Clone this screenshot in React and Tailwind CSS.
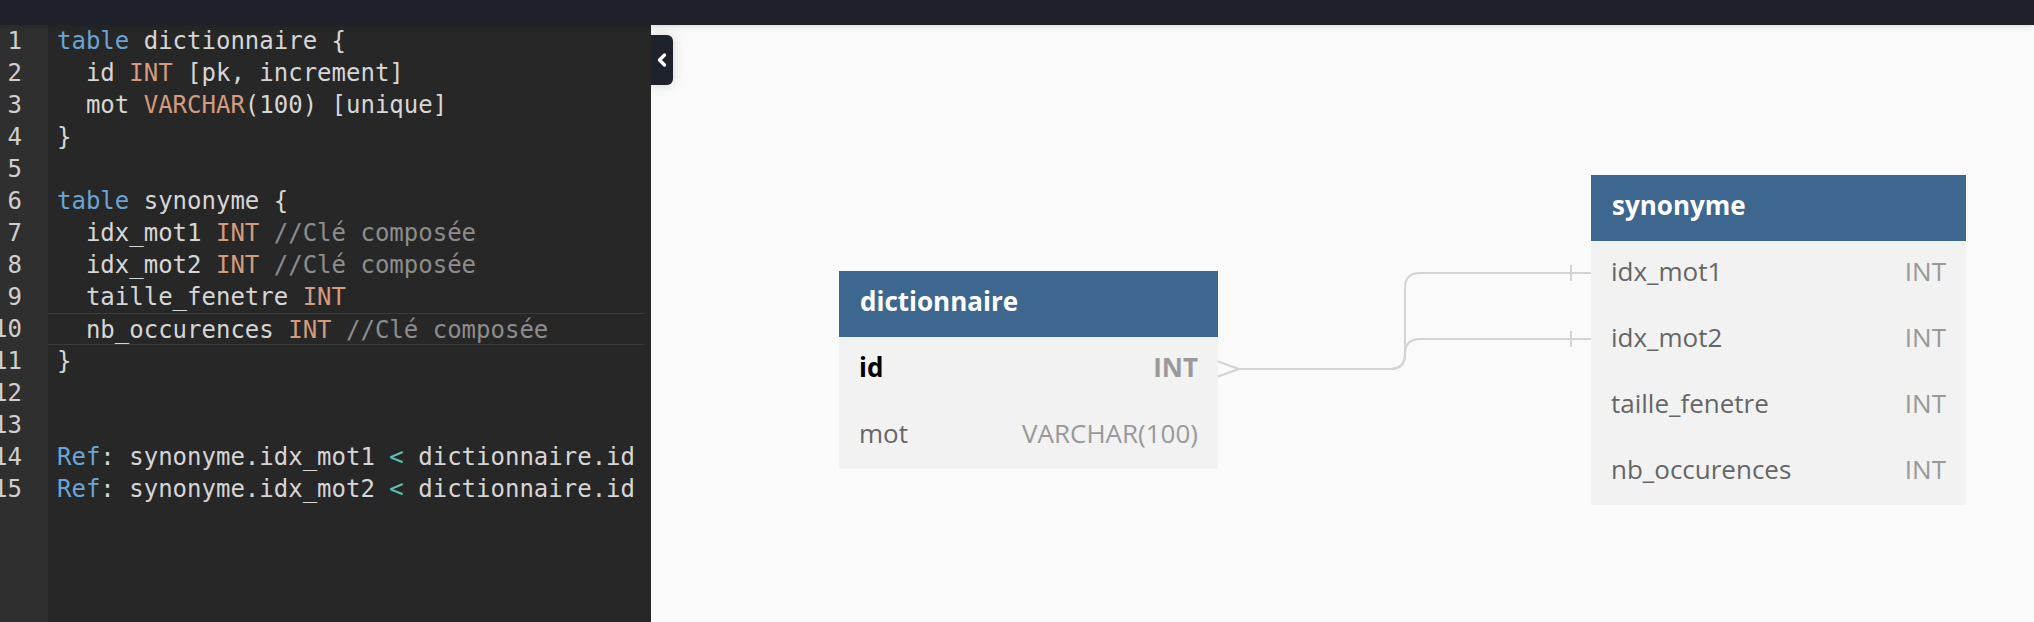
import { ChevronLeft } from 'lucide-react'

const K = ({ children }) => <span className="text-[#6aa4d8]">{children}</span>
const T = ({ children }) => <span className="text-[#d49b7e]">{children}</span>
const C = ({ children }) => <span className="text-[#8d8d8d]">{children}</span>
const O = ({ children }) => <span className="text-[#5fc2b0]">{children}</span>

const lines = [
    <><K>table</K> dictionnaire {'{'}</>,
    <>  id <T>INT</T> [pk, increment]</>,
    <>  mot <T>VARCHAR</T>(100) [unique]</>,
    <>{'}'}</>,
    <></>,
    <><K>table</K> synonyme {'{'}</>,
    <>  idx_mot1 <T>INT</T> <C>//Clé composée</C></>,
    <>  idx_mot2 <T>INT</T> <C>//Clé composée</C></>,
    <>  taille_fenetre <T>INT</T></>,
    <>  nb_occurences <T>INT</T> <C>//Clé composée</C></>,
    <>{'}'}</>,
    <></>,
    <></>,
    <><K>Ref</K>: synonyme.idx_mot1 <O>&lt;</O> dictionnaire.id</>,
    <><K>Ref</K>: synonyme.idx_mot2 <O>&lt;</O> dictionnaire.id</>,
]

function Editor() {
    return (
        <div className="relative flex w-[651px] shrink-0 bg-[#272727] font-['DejaVu_Sans_Mono',monospace] text-[24px] leading-[32px]">
            {/* gutter */}
            <div className="w-[48px] shrink-0 bg-[#2f2f2f] overflow-hidden">
                {lines.map((_, i) => (
                    <div key={i} className="w-[22px] h-[32px] flex justify-end whitespace-nowrap text-[#cfcfcf]">
                        {i + 1}
                    </div>
                ))}
            </div>
            <div className="flex-1 pr-[7px]">
                {lines.map((l, i) => (
                    <div
                        key={i}
                        className={
                            i === 9
                                ? 'h-[32px] pl-[9px] whitespace-pre text-[#d6d6d6] border-y border-[#3b3b3b] box-border'
                                : 'h-[32px] pl-[9px] whitespace-pre text-[#d6d6d6]'
                        }
                    >
                        {l}
                    </div>
                ))}
            </div>
        </div>
    )
}

function Table({ name, fields, className }) {
    return (
        <div className={'absolute bg-[#f2f2f2] font-["Open_Sans",sans-serif] ' + className}>
            <div className="h-[66px] bg-[#3e678f] flex items-center px-[21px] pb-[5px] text-[26px] font-bold text-white">
                {name}
            </div>
            {fields.map((f) => (
                <div key={f.name} className="h-[66px] flex items-center justify-between px-[20px] pb-[5px] text-[26px]">
                    <span className={f.pk ? 'font-bold text-black' : 'text-[#666666]'}>{f.name}</span>
                    <span className={f.pk ? 'font-bold text-[#9a9a9a]' : 'text-[#999999]'}>{f.type}</span>
                </div>
            ))}
        </div>
    )
}

function Canvas() {
    return (
        <div className="relative flex-1 bg-[#fafafa] overflow-hidden">
            <svg className="absolute inset-0 w-full h-full" fill="none" stroke="#d3d3d3" strokeWidth="2">
                <path d="M567 336.5 L588 344 L567 351.5" />
                <path d="M588 344 H739 Q754 344 754 329 V263 Q754 248 769 248 H940" />
                <path d="M588 344 H739 Q754 344 754 329 V329 Q754 314 769 314 H940" />
                <path d="M920 240 V256 M920 306 V322" />
            </svg>
            <Table
                name="dictionnaire"
                className="left-[188px] top-[246px] w-[379px]"
                fields={[
                    { name: 'id', type: 'INT', pk: true },
                    { name: 'mot', type: 'VARCHAR(100)' },
                ]}
            />
            <Table
                name="synonyme"
                className="left-[940px] top-[150px] w-[375px]"
                fields={[
                    { name: 'idx_mot1', type: 'INT' },
                    { name: 'idx_mot2', type: 'INT' },
                    { name: 'taille_fenetre', type: 'INT' },
                    { name: 'nb_occurences', type: 'INT' },
                ]}
            />
            {/* collapse toggle */}
            <button className="absolute left-0 top-[10px] w-[22px] h-[50px] bg-[#1e222b] rounded-r-[6px] flex items-center justify-center shadow-[0_0_12px_rgba(0,0,0,0.15)]">
                <ChevronLeft size={20} strokeWidth={4} className="text-white" />
            </button>
        </div>
    )
}

export default function App() {
    return (
        <div className="w-[2034px] h-[622px] flex flex-col overflow-hidden">
            <div className="h-[25px] shrink-0 bg-[#1e212a] relative z-10 shadow-[0_2px_6px_rgba(0,0,0,0.12)]" />
            <div className="flex flex-1 min-h-0">
                <Editor />
                <Canvas />
            </div>
        </div>
    )
}
